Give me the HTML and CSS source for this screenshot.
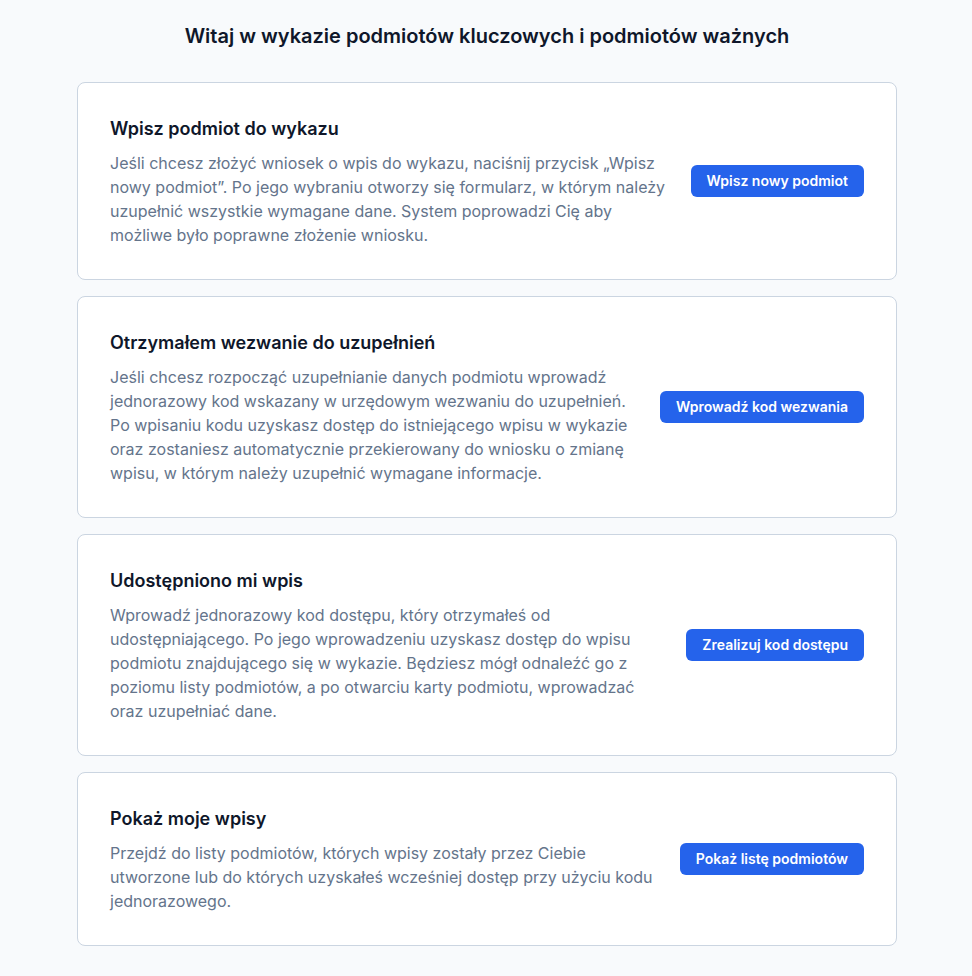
FILE: index.html
```html
<!DOCTYPE html>
<html lang="pl">
<head>
    <meta charset="UTF-8">
    <meta name="viewport" content="width=device-width, initial-scale=1.0">
    <title>Wykaz podmiotów kluczowych i ważnych</title>
    <link rel="stylesheet" href="styles.css">
</head>
<body>
    <main class="page">
        <h1 class="page-title">Witaj w wykazie podmiotów kluczowych i podmiotów ważnych</h1>

        <div class="cards">
            <section class="card">
                <div class="card-text">
                    <h2>Wpisz podmiot do wykazu</h2>
                    <p>Jeśli chcesz złożyć wniosek o wpis do wykazu, naciśnij przycisk „Wpisz nowy podmiot”. Po jego wybraniu otworzy się formularz, w którym należy uzupełnić wszystkie wymagane dane. System poprowadzi Cię aby możliwe było poprawne złożenie wniosku.</p>
                </div>
                <button type="button" class="btn">Wpisz nowy podmiot</button>
            </section>

            <section class="card">
                <div class="card-text">
                    <h2>Otrzymałem wezwanie do uzupełnień</h2>
                    <p>Jeśli chcesz rozpocząć uzupełnianie danych podmiotu wprowadź jednorazowy kod wskazany w urzędowym wezwaniu do uzupełnień. Po wpisaniu kodu uzyskasz dostęp do istniejącego wpisu w wykazie oraz zostaniesz automatycznie przekierowany do wniosku o zmianę wpisu, w którym należy uzupełnić wymagane informacje.</p>
                </div>
                <button type="button" class="btn">Wprowadź kod wezwania</button>
            </section>

            <section class="card">
                <div class="card-text">
                    <h2>Udostępniono mi wpis</h2>
                    <p>Wprowadź jednorazowy kod dostępu, który otrzymałeś od udostępniającego. Po jego wprowadzeniu uzyskasz dostęp do wpisu podmiotu znajdującego się w wykazie. Będziesz mógł odnaleźć go z poziomu listy podmiotów, a po otwarciu karty podmiotu, wprowadzać oraz uzupełniać dane.</p>
                </div>
                <button type="button" class="btn">Zrealizuj kod dostępu</button>
            </section>

            <section class="card">
                <div class="card-text">
                    <h2>Pokaż moje wpisy</h2>
                    <p>Przejdź do listy podmiotów, których wpisy zostały przez Ciebie utworzone lub do których uzyskałeś wcześniej dostęp przy użyciu kodu jednorazowego.</p>
                </div>
                <button type="button" class="btn">Pokaż listę podmiotów</button>
            </section>
        </div>
    </main>
</body>
</html>
```

FILE: styles.css
```css
body { margin: 0; background: #f8fafc; font-family: Inter, "Noto Sans", sans-serif; color: #0f172a; }
.page { width: 820px; margin: 0 auto; padding: 22px 0 30px 2px; }
.page-title { margin: 0 0 32px; font-size: 20px; line-height: 28px; font-weight: 600; text-align: center; }
.cards { display: flex; flex-direction: column; gap: 16px; }
.card { display: flex; align-items: center; gap: 24px; padding: 32px; background: #fff; border: 1px solid #cbd5e1; border-radius: 8px; }
.card-text { flex: 1; }
.card h2 { margin: 0 0 8px; font-size: 18px; line-height: 28px; font-weight: 600; }
.card p { margin: 0; font-size: 16px; line-height: 24px; color: #64748b; }
.btn { flex: none; background: #2563eb; color: #fff; border: none; border-radius: 6px; padding: 6px 16px; font-family: inherit; font-size: 14px; line-height: 20px; font-weight: 600; cursor: pointer; }
.btn:hover { background: #1d4ed8; }
```
